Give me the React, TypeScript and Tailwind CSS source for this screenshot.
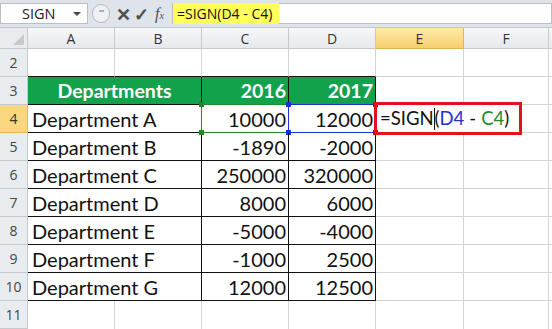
import React from "react";

const GRID = "border-[#d4d4d4]";

function RefBox({ border, fill }: { border: string; fill: string }) {
  return (
    <div className={`absolute left-[-1px] top-[-1px] right-[-1px] bottom-[-1px] border ${border} pointer-events-none`}>
      <div className={`absolute -left-[3px] -top-[3px] w-[5px] h-[5px] ${fill}`} />
      <div className={`absolute -right-[3px] -top-[3px] w-[5px] h-[5px] ${fill}`} />
      <div className={`absolute -left-[3px] -bottom-[3px] w-[5px] h-[5px] ${fill}`} />
      <div className={`absolute -right-[3px] -bottom-[3px] w-[5px] h-[5px] ${fill}`} />
    </div>
  );
}

const data: [string, string, string][] = [
  ["Department A", "10000", "12000"],
  ["Department B", "-1890", "-2000"],
  ["Department C", "250000", "320000"],
  ["Department D", "8000", "6000"],
  ["Department E", "-5000", "-4000"],
  ["Department F", "-1000", "2500"],
  ["Department G", "12000", "12500"],
];

function RowHead({ n, active }: { n: number; active?: boolean }) {
  return (
    <div
      className={`h-[28px] flex items-center justify-center border-r border-b text-[14px] ${
        active
          ? "bg-[#f9d77e] border-[#e2b659] text-[#333]"
          : "bg-[#e9ecef] border-[#c5c9ce] text-[#444]"
      }`}
    >
      {n}
    </div>
  );
}

export default function App() {
  const cell = "font-['Lato',sans-serif] text-[20px] text-[#111] leading-none";
  const head = "font-['Lato',sans-serif] text-[19.5px] font-bold text-white";
  return (
    <div className="w-[552px] h-[329px] overflow-hidden bg-white relative font-['Open_Sans',sans-serif]">
      {/* formula bar */}
      <div className="h-[28px] bg-[#dfe4ea] flex items-start pt-[3px] border-b border-[#c2c7cd]">
        <div className="h-[21px] w-[88px] bg-white border border-[#b9bec4] flex items-center text-[14.5px] text-[#222] pl-[21px] relative">
          SIGN
          <span className="absolute right-[6px] top-[8px] w-0 h-0 border-l-[4px] border-r-[4px] border-t-[4px] border-l-transparent border-r-transparent border-t-[#444]" />
        </div>
        <div className="h-[21px] w-[84px] flex items-center relative">
          <div className="absolute left-[4px] top-[1px] w-[18px] h-[19px] rounded-full border border-[#b4b9bf] bg-[#eef1f4]">
            <div className="absolute left-[6px] top-[5px] w-[5px] h-[2px] bg-[#aab0b6]" />
          </div>
          <span className="absolute left-[28px] top-[-2px] text-[18px] font-bold text-[#505050]">✕</span>
          <span className="absolute left-[46px] top-[-2px] text-[18px] font-bold text-[#505050]">✓</span>
          <span className="absolute left-[67px] top-[-1px] text-[16px] italic text-[#505050] font-['Liberation_Serif',serif]">
            f<span className="text-[10px]">x</span>
          </span>
        </div>
        <div className="h-[21px] flex-1 bg-white border border-[#b9bec4] flex items-center">
          <span className="h-[21px] w-[106px] bg-[#ffff5a] flex items-center pl-[4px] text-[14px] text-[#111]">
            =SIGN(D4 - C4)
          </span>
        </div>
      </div>

      {/* sheet grid */}
      <div className="grid grid-cols-[28px_87px_87px_87px_87px_88px_85px_1fr]">
        {/* column header row */}
        <div className="h-[21px] bg-[#e9ecef] border-r border-b border-[#c5c9ce] relative">
          <div
            className="absolute right-[3px] bottom-[3px] w-0 h-0"
            style={{ borderBottom: "11px solid #c7cbd0", borderLeft: "11px solid transparent" }}
          />
        </div>
        {["A", "B", "C", "D"].map((c) => (
          <div key={c} className="h-[21px] bg-gradient-to-b from-[#f6f7f8] to-[#e6e9ec] border-r border-b border-[#c5c9ce] flex items-center justify-center text-[14px] text-[#333]">
            {c}
          </div>
        ))}
        <div className="h-[21px] bg-gradient-to-b from-[#fdeaa8] to-[#f6cf6d] border-r border-b border-[#e0b458] flex items-center justify-center text-[14px] text-[#333]">
          E
        </div>
        <div className="h-[21px] bg-gradient-to-b from-[#f6f7f8] to-[#e6e9ec] border-r border-b border-[#c5c9ce] flex items-center justify-center text-[14px] text-[#333]">
          F
        </div>
        <div className="h-[21px] bg-gradient-to-b from-[#f6f7f8] to-[#e6e9ec] border-b border-[#c5c9ce]" />

        {/* row 2 */}
        <RowHead n={2} />
        <div className="h-[28px] border-r border-b border-r-[#d4d4d4] border-b-[#111]" />
        <div className="h-[28px] border-r border-b border-r-[#d4d4d4] border-b-[#111]" />
        <div className="h-[28px] border-r border-b border-r-[#d4d4d4] border-b-[#111]" />
        <div className="h-[28px] border-r border-b border-r-[#d4d4d4] border-b-[#111]" />
        <div className={`h-[28px] border-r border-b ${GRID}`} />
        <div className={`h-[28px] border-r border-b ${GRID}`} />
        <div className={`h-[28px] border-b ${GRID}`} />

        {/* row 3 header */}
        <RowHead n={3} />
        <div className={`col-span-2 h-[28px] bg-[#12a24c] border-r border-b border-[#111] flex items-center justify-center ${head}`}>
          Departments
        </div>
        <div className={`h-[28px] bg-[#12a24c] border-r border-b border-[#111] flex items-center justify-end pr-[2px] ${head}`}>
          2016
        </div>
        <div className={`h-[28px] bg-[#12a24c] border-r border-b border-[#111] flex items-center justify-end pr-[2px] ${head}`}>
          2017
        </div>
        <div className={`h-[28px] border-r border-b ${GRID}`} />
        <div className={`h-[28px] border-r border-b ${GRID}`} />
        <div className={`h-[28px] border-b ${GRID}`} />

        {/* data rows */}
        {data.map(([name, a, b], i) => (
          <React.Fragment key={name}>
            <RowHead n={i + 4} active={i === 0} />
            <div className={`col-span-2 h-[28px] border-r border-b border-[#111] flex items-center pl-[4px] ${cell}`}>
              {name}
            </div>
            <div className={`relative h-[28px] border-r border-b border-[#111] flex items-center justify-end pr-[2px] ${cell}`}>
              {a}
              {i === 0 && <RefBox border="border-[#1b8a2e]" fill="bg-[#1b8a2e]" />}
            </div>
            <div className={`relative h-[28px] border-r border-b border-[#111] flex items-center justify-end pr-[2px] ${cell}`}>
              {b}
              {i === 0 && <RefBox border="border-[#1a2fd6]" fill="bg-[#1a2fd6]" />}
            </div>
            <div className={`relative h-[28px] border-r border-b ${GRID} ${i === 0 ? "border-r-white" : ""}`}>
              {i === 0 && (
                <div className="absolute left-[4px] top-0 h-[27px] flex items-center whitespace-nowrap font-['Lato',sans-serif] text-[18.5px] text-[#111] leading-none">
                  =SIGN<span className="inline-block w-[1px] h-[22px] bg-[#111]" />
                  (<span className="text-[#2433c9]">D4</span>
                  <span className="w-[5px]" />-<span className="w-[5px]" />
                  <span className="text-[#1e8a30]">C4</span>)
                </div>
              )}
            </div>
            <div className={`h-[28px] border-r border-b ${GRID}`} />
            <div className={`h-[28px] border-b ${GRID}`} />
          </React.Fragment>
        ))}

        {/* row 11 */}
        <RowHead n={11} />
        <div className={`h-[28px] border-r ${GRID}`} />
        <div className={`h-[28px] border-r ${GRID}`} />
        <div className={`h-[28px] border-r ${GRID}`} />
        <div className={`h-[28px] border-r ${GRID}`} />
        <div className={`h-[28px] border-r ${GRID}`} />
        <div className={`h-[28px] border-r ${GRID}`} />
        <div className="h-[28px]" />
      </div>

      {/* red annotation box */}
      <div className="absolute left-[374px] top-[102px] w-[148px] h-[33px] border-[3px] border-[#e3101e] pointer-events-none" />
    </div>
  );
}
